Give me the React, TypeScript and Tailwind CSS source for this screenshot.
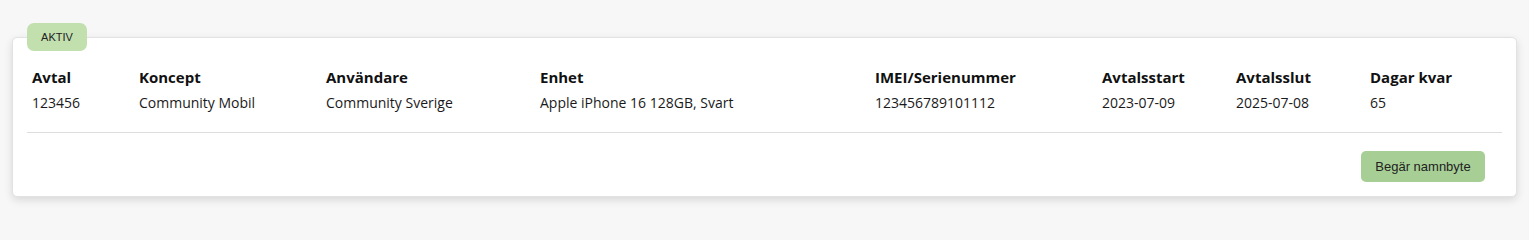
import React from "react";

const cols = [
  { h: "Avtal", v: "123456" },
  { h: "Koncept", v: "Community Mobil" },
  { h: "Användare", v: "Community Sverige" },
  { h: "Enhet", v: "Apple iPhone 16 128GB, Svart" },
  { h: "IMEI/Serienummer", v: "123456789101112" },
  { h: "Avtalsstart", v: "2023-07-09" },
  { h: "Avtalsslut", v: "2025-07-08" },
  { h: "Dagar kvar", v: "65" },
];

export default function App() {
  return (
    <div className="min-h-screen w-full bg-[#f7f7f7] pt-[37px] pb-[14px]">
      <div className="relative mx-3 rounded-[5px] border border-[#e2e2e2] bg-white px-[14px] pt-[29px] pb-[14px] shadow-[0_3px_8px_rgba(0,0,0,0.13)]">
        <span
          className="absolute left-[14px] top-[-15px] flex h-[28px] w-[60px] items-center justify-center rounded-[7px] bg-[#c2dfae] text-[11px] text-[#222]"
          style={{ fontFamily: "'Liberation Sans', Arial, sans-serif" }}
        >
          AKTIV
        </span>
        <div
          className="grid grid-cols-[107px_187px_214px_335px_227px_134px_134px_1fr] px-[5px] text-[#111]"
          style={{ fontFamily: "'Open Sans', sans-serif" }}
        >
          {cols.map((c) => (
            <div key={c.h} className="flex flex-col">
              <div className="h-[20px] text-[15px] font-bold leading-[20px]">{c.h}</div>
              <div className="mt-[6px] h-[20px] text-[14px] leading-[20px] text-[#1a1a1a]">{c.v}</div>
            </div>
          ))}
        </div>
        <div className="mt-[19px] h-px bg-[#dddddd]" />
        <div className="flex justify-end pt-[18px] pr-[17px]">
          <button
            className="h-[31px] w-[124px] rounded-[5px] bg-[#a7cf95] text-[13px] text-[#222]"
            style={{ fontFamily: "'Liberation Sans', Arial, sans-serif" }}
          >
            Begär namnbyte
          </button>
        </div>
      </div>
    </div>
  );
}
